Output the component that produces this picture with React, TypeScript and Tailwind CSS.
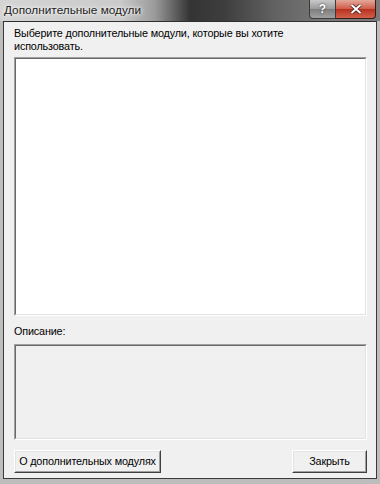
export default function App() {
  return (
    <div
      className="w-[380px] h-[484px] flex flex-col bg-[#bdbdbd] overflow-hidden"
      style={{ fontFamily: '"Liberation Sans", Arial, sans-serif' }}
    >
      {/* Title bar */}
      <div className="relative h-[21px] shrink-0 flex items-center bg-[linear-gradient(90deg,#d4d4d4_0px,#cacaca_120px,#9a9a9a_155px,#343434_190px,#3e3e3e_225px,#626262_275px,#7a7a7a_330px,#7a7a7a_380px)]">
        <span className="pl-[4px] text-[11.8px] text-[#1c1c1c] [text-shadow:0_0_6px_#fff,0_0_3px_#fff]">
          Дополнительные модули
        </span>
        <div className="absolute right-[4px] top-0 flex h-[19px]">
          <div className="w-[27px] h-full rounded-bl-[4px] border border-t-0 border-[#3a3a3a] bg-[linear-gradient(180deg,#c8c8c8,#9a9a9a_50%,#7d7d7d_51%,#a0a0a0)] flex items-center justify-center text-[12px] font-bold text-white [text-shadow:0_0_2px_#222]">
            ?
          </div>
          <div className="w-[40px] h-full rounded-br-[4px] border border-l-0 border-t-0 border-[#3a1a16] bg-[linear-gradient(180deg,#e3a89a,#cf5a48_50%,#b83120_51%,#d0604a)] flex items-center justify-center">
            <svg width="12" height="10" viewBox="0 0 12 10">
              <path d="M1.5 1 L10.5 9 M10.5 1 L1.5 9" stroke="#3a1a16" strokeWidth="3.4" />
              <path d="M1.5 1 L10.5 9 M10.5 1 L1.5 9" stroke="#fff" strokeWidth="2" />
            </svg>
          </div>
        </div>
      </div>
      <div className="h-px bg-[#2e2e2e] shrink-0 mx-[3px]" />

      {/* Client area */}
      <div className="flex-1 mx-[3px] mb-[5px] border-x border-b border-[#3a3a3a] bg-[#f0f0f0] flex flex-col pl-[10px] pr-[9px] text-[10.8px] tracking-[-0.15px] leading-[13px] text-black">
        <p className="mt-[5px] pr-[70px]">Выберите дополнительные модули, которые вы хотите использовать.</p>
        <div className="mt-[4px] h-[259px] border border-t-[#a0a0a0] border-l-[#a0a0a0] border-b-[#fff] border-r-[#fff]">
          <div className="h-full border border-t-[#696969] border-l-[#696969] border-b-[#e3e3e3] border-r-[#e3e3e3] bg-white" />
        </div>
        <p className="mt-[9px]">Описание:</p>
        <div className="mt-[6px] h-[96px] border border-t-[#a0a0a0] border-l-[#a0a0a0] border-b-[#fff] border-r-[#fff]">
          <div className="h-full border border-t-[#696969] border-l-[#696969] border-b-[#e3e3e3] border-r-[#e3e3e3] bg-[#f0f0f0]" />
        </div>
        <div className="mt-[10px] flex justify-between">
          <button className="h-[23px] w-[147px] border border-t-[#fff] border-l-[#fff] border-b-[#404040] border-r-[#404040] bg-[#f0f0f0] whitespace-nowrap">
            <span className="block h-full border border-t-[#e3e3e3] border-l-[#e3e3e3] border-b-[#a0a0a0] border-r-[#a0a0a0] leading-[19px]">
              О дополнительных модулях
            </span>
          </button>
          <button className="h-[23px] w-[75px] border border-t-[#fff] border-l-[#fff] border-b-[#404040] border-r-[#404040] bg-[#f0f0f0] whitespace-nowrap">
            <span className="block h-full border border-t-[#e3e3e3] border-l-[#e3e3e3] border-b-[#a0a0a0] border-r-[#a0a0a0] leading-[19px]">
              Закрыть
            </span>
          </button>
        </div>
      </div>
    </div>
  );
}
